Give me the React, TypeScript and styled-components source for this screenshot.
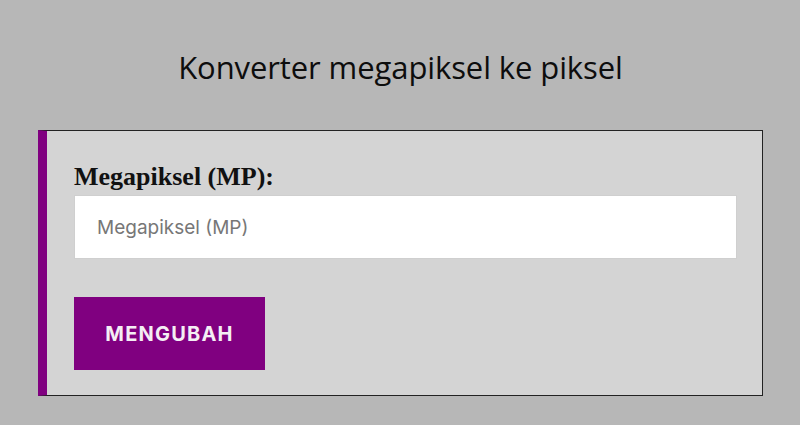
import styled, { createGlobalStyle } from "styled-components";

const GlobalStyle = createGlobalStyle`
  html, body {
    margin: 0;
    padding: 0;
    background: #b7b7b7;
  }
`;

const Page = styled.div`
  width: 800px;
  height: 425px;
  box-sizing: border-box;
  padding: 47px 37px 0 38px;
  display: flex;
  flex-direction: column;
`;

const Title = styled.h1`
  margin: 0 0 42px;
  text-align: center;
  font-family: "Open Sans", sans-serif;
  font-weight: 400;
  font-size: 31px;
  line-height: 41px;
  letter-spacing: -0.1px;
  color: #0d0d0d;
`;

const Panel = styled.form`
  background: #d4d4d4;
  border: 1px solid #222;
  border-left: 9px solid #800080;
  padding: 28px 25px 25px 27px;
  display: flex;
  flex-direction: column;
  align-items: flex-start;
`;

const Label = styled.label`
  font-family: "Liberation Serif", serif;
  font-weight: 700;
  font-size: 26px;
  line-height: 36px;
  color: #111;
`;

const Input = styled.input`
  box-sizing: border-box;
  width: 100%;
  height: 64px;
  margin: 0 0 38px;
  padding: 0 22px;
  border: 1px solid #cfcfcf;
  background: #fff;
  font-family: Inter, sans-serif;
  font-size: 19px;
  color: #333;
  outline: none;

  &::placeholder {
    color: #777;
  }
`;

const Button = styled.button`
  width: 191px;
  height: 73px;
  border: none;
  background: #800080;
  color: #f4eef4;
  font-family: Inter, sans-serif;
  font-weight: 700;
  font-size: 20px;
  letter-spacing: 1.2px;
  cursor: pointer;
`;

export default function App() {
  return (
    <>
      <GlobalStyle />
      <Page>
        <Title>Konverter megapiksel ke piksel</Title>
        <Panel onSubmit={(e) => e.preventDefault()}>
          <Label htmlFor="mp">Megapiksel (MP):</Label>
          <Input id="mp" type="text" placeholder="Megapiksel (MP)" />
          <Button type="submit">MENGUBAH</Button>
        </Panel>
      </Page>
    </>
  );
}
